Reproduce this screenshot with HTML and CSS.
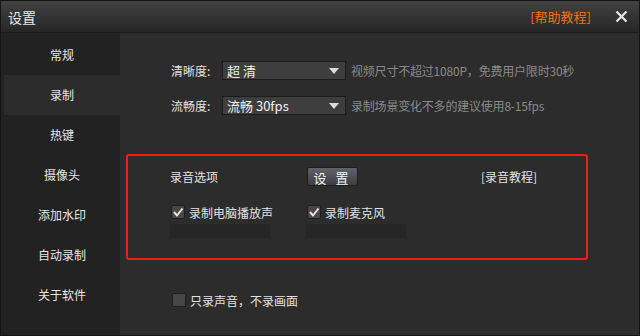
FILE: index.html
```html
<!DOCTYPE html>
<html lang="zh-CN">

<head>
    <meta charset="UTF-8">
    <link rel="stylesheet" href="styles.css">
    <title>设置</title>
</head>

<body>
    <div class="window">
        <div class="titlebar">
            <span class="title">设置</span>
            <span class="help">[帮助教程]</span>
            <span class="close">
                <svg width="13" height="13" viewBox="0 0 13 13"><path d="M1.5 1.5 L11.5 11.5 M11.5 1.5 L1.5 11.5" stroke="#e6e6e6" stroke-width="2.2" /></svg>
            </span>
        </div>

        <div class="main">
            <div class="sidebar">
                <div class="nav-item">常规</div>
                <div class="nav-item active">录制</div>
                <div class="nav-item">热键</div>
                <div class="nav-item">摄像头</div>
                <div class="nav-item">添加水印</div>
                <div class="nav-item">自动录制</div>
                <div class="nav-item">关于软件</div>
            </div>

            <div class="content">
                <div class="form-row">
                    <span class="label">清晰度:</span>
                    <div class="select">
                        <span class="select-value">超 清</span>
                        <span class="arrow"></span>
                    </div>
                    <span class="hint">视频尺寸不超过1080P，免费用户限时30秒</span>
                </div>
                <div class="form-row">
                    <span class="label">流畅度:</span>
                    <div class="select">
                        <span class="select-value">流畅 30fps</span>
                        <span class="arrow"></span>
                    </div>
                    <span class="hint">录制场景变化不多的建议使用8-15fps</span>
                </div>

                <div class="audio-box">
                    <div class="audio-head">
                        <span class="audio-title">录音选项</span>
                        <button class="btn">设 置</button>
                        <span class="audio-link">[录音教程]</span>
                    </div>
                    <div class="audio-opts">
                        <div class="audio-opt">
                            <label class="check">
                                <span class="box checked">
                                    <svg width="12" height="12" viewBox="0 0 12 12"><path d="M2 6 L5 9.5 L10.5 2.5" fill="none" stroke="#f3dede" stroke-width="2" /></svg>
                                </span>
                                录制电脑播放声
                            </label>
                            <div class="meter"></div>
                        </div>
                        <div class="audio-opt">
                            <label class="check">
                                <span class="box checked">
                                    <svg width="12" height="12" viewBox="0 0 12 12"><path d="M2 6 L5 9.5 L10.5 2.5" fill="none" stroke="#f3dede" stroke-width="2" /></svg>
                                </span>
                                录制麦克风
                            </label>
                            <div class="meter"></div>
                        </div>
                    </div>
                </div>

                <label class="check only-audio">
                    <span class="box"></span>
                    只录声音，不录画面
                </label>
            </div>
        </div>
    </div>
</body>

</html>
```

FILE: styles.css
```css
body {
    margin: 0;
    padding: 0;
    background-color: #2c2c2c;
    font-family: "Noto Sans CJK SC", "DejaVu Sans", sans-serif;
    font-size: 12px;
    color: #e2e2e2;
}

.window {
    width: 640px;
    height: 336px;
    box-sizing: border-box;
    border: 1px solid #141414;
    display: flex;
    flex-direction: column;
    overflow: hidden;
}

.titlebar {
    height: 31px;
    flex-shrink: 0;
    border-bottom: 1px solid #1b1b1b;
    background: linear-gradient(#424242, #262626);
    display: flex;
    align-items: center;
    padding: 0 0 0 7px;
}

.title {
    font-size: 14px;
    color: #e8e8e8;
    flex: 1;
}

.help {
    color: #ff6d0f;
    font-size: 13px;
    margin-right: 24px;
}

.close {
    display: flex;
    margin-right: 11px;
}

.main {
    flex: 1;
    display: flex;
}

.sidebar {
    width: 119px;
    background-color: #222;
    padding-top: 2px;
}

.nav-item {
    height: 40px;
    line-height: 40px;
    margin-left: 3px;
    text-align: center;
    color: #e6e6e6;
}

.nav-item.active {
    background-color: #2c2c2c;
}

.content {
    flex: 1;
    padding: 28px 0 0 6px;
}

.form-row {
    display: flex;
    align-items: center;
    height: 19px;
    margin-bottom: 16px;
    padding-left: 45px;
}

.label {
    width: 51px;
}

.select {
    width: 118px;
    height: 17px;
    border: 1px solid #1c1c1c;
    background-color: #3e3e3e;
    display: flex;
    align-items: center;
    padding-left: 4px;
    box-sizing: content-box;
    margin-right: 5px;
}

.select-value {
    flex: 1;
    font-size: 13px;
    color: #f0f0f0;
}

.arrow {
    width: 0;
    height: 0;
    border-left: 5px solid transparent;
    border-right: 5px solid transparent;
    border-top: 6px solid #dcdcdc;
    margin-right: 6px;
}

.hint {
    color: #8a8a8a;
    letter-spacing: -0.2px;
}

.audio-box {
    margin-top: 39px;
    width: 458px;
    height: 102px;
    border: 2px solid #f21f16;
    border-radius: 3px;
    box-sizing: content-box;
}

.audio-head {
    display: flex;
    align-items: center;
    height: 18px;
    margin-top: 11px;
    padding-left: 42px;
}

.audio-title {
    width: 137px;
}

.btn {
    width: 51px;
    height: 19px;
    padding: 0;
    border: 1px solid #1d1d1f;
    border-radius: 2px;
    background: linear-gradient(#60636a, #3c3e44);
    color: #f2f2f2;
    font-family: inherit;
    font-size: 13px;
    letter-spacing: 3px;
}

.audio-link {
    margin-left: 123px;
}

.audio-opts {
    display: flex;
    margin-top: 20px;
    padding-left: 42px;
}

.audio-opt {
    width: 136px;
}

.check {
    display: flex;
    align-items: center;
    gap: 4px;
    height: 14px;
    padding-left: 1px;
}

.box {
    width: 12px;
    height: 12px;
    border: 1px solid #1f1f1f;
    border-radius: 2px;
    background-color: #474747;
    display: flex;
    align-items: center;
    justify-content: center;
}

.meter {
    width: 100px;
    height: 14px;
    margin-top: 5px;
    background-color: #262626;
}

.only-audio {
    margin-top: 33px;
    margin-left: 45px;
}
```
